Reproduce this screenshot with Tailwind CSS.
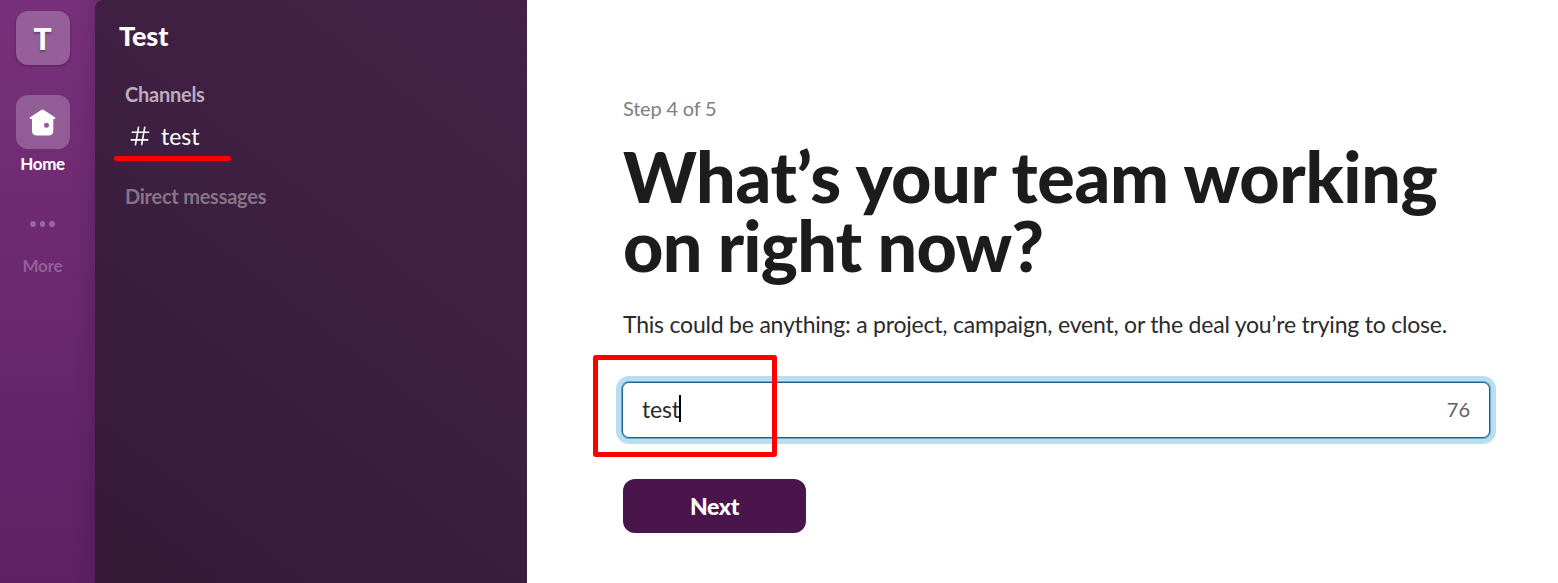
<!DOCTYPE html>
<html lang="en">
<head>
<meta charset="utf-8">
<title>Set up your team</title>
<script src="https://cdn.jsdelivr.net/npm/@tailwindcss/browser@4"></script>
</head>
<body class="h-screen overflow-hidden bg-white font-[Lato,sans-serif]">
<div class="flex h-[583px] w-[1558px] overflow-hidden">
  <div class="flex w-[527px] shrink-0 overflow-hidden bg-linear-to-b from-[#79307c] to-[#5e2063]">
    <nav class="flex w-[95px] shrink-0 flex-col items-center pr-[10px] pt-[11px]">
      <div class="flex size-[54px] items-center justify-center rounded-xl bg-[#965f9a] text-[30px] leading-none font-black text-white shadow-[0_1px_3px_rgba(0,0,0,0.3)] text-shadow-[0_2px_2px_rgba(0,0,0,0.3)]"><span>T</span></div>
      <div class="mt-[30px] flex size-[54px] items-center justify-center rounded-xl bg-[#925d96]">
        <svg class="size-[27px]" viewBox="0 0 27 27" fill="white"><path fill-rule="evenodd" d="M12.300 1q1.200-.8 2.400 0L26 8.300q.5.500.3 1.200-.2.600-1 .6H24.300V21.500q0 5-5 5H8q-5 0-5-5V10.100H1.700q-.8 0-1-.6-.2-.7.3-1.200ZM17.500 13.700a2.500 2.500 0 1 0 0 5 2.500 2.500 0 1 0 0-5Z"/></svg>
      </div>
      <div class="mt-[5px] text-[17px] leading-5 font-bold tracking-[-0.4px] text-white">Home</div>
      <div class="mt-[47px] flex h-[6px] gap-1">
        <span class="size-[5.500px] rounded-full bg-[#9a689e]"></span><span class="size-[5.500px] rounded-full bg-[#9a689e]"></span><span class="size-[5.500px] rounded-full bg-[#9a689e]"></span>
      </div>
      <div class="mt-[29px] text-[17px] leading-5 font-bold tracking-[-0.2px] text-[#93609a]">More</div>
    </nav>
    <aside class="flex grow flex-col rounded-tl-lg bg-linear-[38deg,#351937_0%,#3d1f40_50%,#452147_100%] pl-6 pt-5 shadow-[0_0_22px_rgba(0,0,0,0.2)]">
      <h2 class="text-[27px] leading-8 font-black tracking-[-0.1px] text-white">Test</h2>
      <div class="mt-[30px] pl-1.5 text-[20px] leading-6 font-bold tracking-[-0.25px] text-[#bcadbe]">Channels</div>
      <div class="mt-[16px] flex h-7 items-center gap-[11px] pl-[11px] text-[23px] leading-7 text-white">
        <svg class="size-5" viewBox="0 0 20 20" fill="none" stroke="white" stroke-width="1.600" stroke-linecap="round"><path d="M8.500 1.300 5.500 18.700M14.700 1.300 11.700 18.700M2.300 6.300H18.700M1.300 13.900H17.700"/></svg>
        <span>test</span>
      </div>
      <div class="mt-[6px] -ml-[5px] h-[5px] w-[117px] rounded-full bg-[#fe0000]"></div>
      <div class="mt-[23px] pl-1.5 text-[20px] leading-6 font-bold tracking-[-0.25px] text-[#857587]">Direct messages</div>
    </aside>
  </div>
  <main class="flex w-[1031px] flex-col items-start pl-24 pt-[96px] text-[#1d1c1d]">
    <p class="text-[20px] leading-6 tracking-[-0.2px] text-[#7f7e7f]">Step 4 of 5</p>
    <h1 class="mt-[22px] text-[70px] leading-[69px] font-black whitespace-nowrap"><span class="tracking-[-0.33px]">What’s your team working</span><br><span class="tracking-[-0.7px]">on right now?</span></h1>
    <p class="mt-[28px] text-[23px] leading-8 tracking-[-0.21px] whitespace-nowrap text-[#2b2a2b]">This could be anything: a project, campaign, event, or the deal you’re trying to close.</p>
    <div class="relative mt-[42px] -ml-px flex h-[56px] w-[868px] items-center justify-between rounded-[7px] border border-[#1d5f96] bg-white pr-[19px] pb-[3px] pl-[19px] shadow-[0_0_0_1px_#6aa6cb,0_0_0_6px_#b9dfee]">
      <span class="flex items-center text-[23px] leading-7 tracking-[-0.2px] text-[#2b2a2b]">test<span class="-ml-px h-[27px] w-[2px] bg-black"></span></span>
      <span class="text-[20px] text-[#616061]">76</span>
      <div class="absolute -top-[28px] -left-[30px] h-[102px] w-[184px] rounded-[3px] border-[5px] border-[#fe0000]"></div>
    </div>
    <button class="mt-[41px] h-[54px] w-[183px] rounded-xl bg-[#4a154b] text-[23px] font-black tracking-[-0.4px] text-white">Next</button>
  </main>
</div>
</body>
</html>
